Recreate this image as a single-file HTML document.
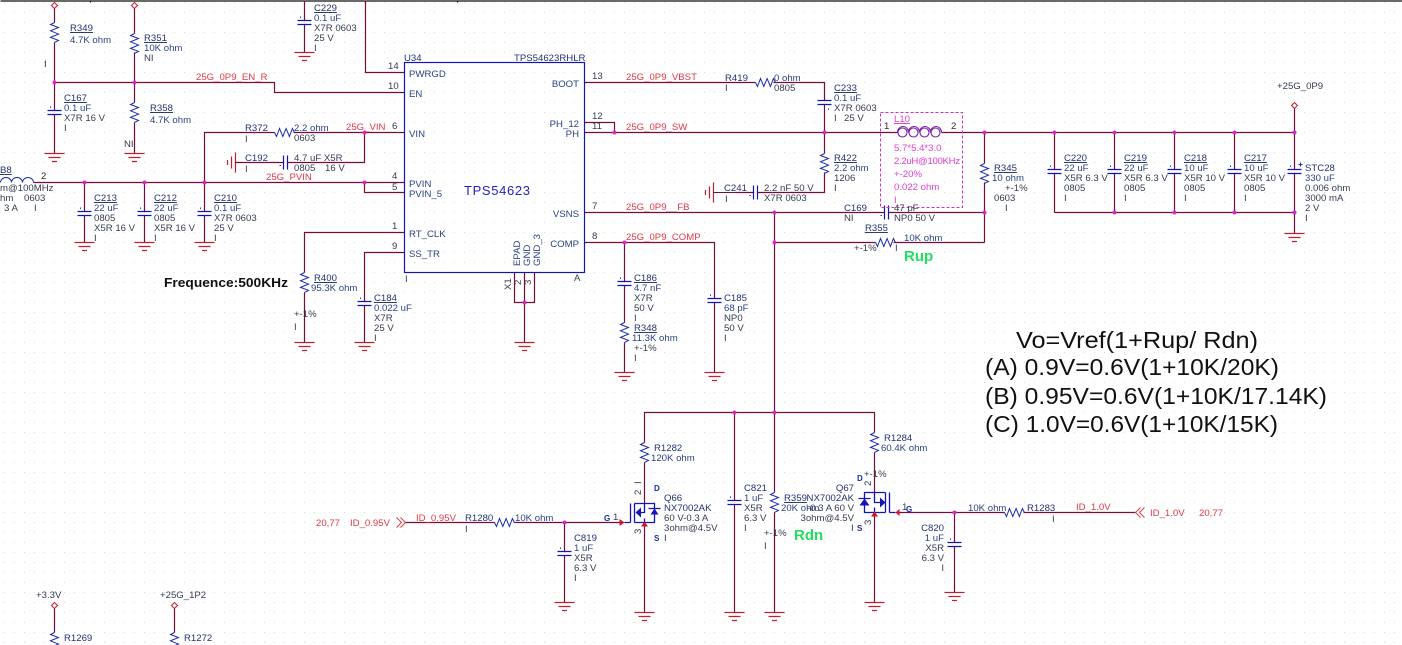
<!DOCTYPE html>
<html><head><meta charset="utf-8"><style>
html,body{margin:0;padding:0;background:#fff}
svg{display:block}
text{font-family:"Liberation Sans",sans-serif;font-size:9.6px;fill:#343c50}
.r{fill:#243270}.u{fill:#243270;text-decoration:underline}
.n{fill:#e03846}.p{fill:#2a4280}.k{fill:#2c2c2c}.m{fill:#e040d0}
.w{fill:none;stroke:#730e38;stroke-width:1.2}
.e{text-anchor:end}
.big{font-size:23px;fill:#111}
</style></head><body>
<svg width="1402" height="645" viewBox="0 0 1402 645" xmlns="http://www.w3.org/2000/svg">
<defs>
<pattern id="g" x="4" y="2" width="10" height="10" patternUnits="userSpaceOnUse"><rect width="1" height="1" fill="#d9d9d2"/></pattern>
<g id="rv"><path d="M0 0l-4 2 8 3-8 3.3 8 3.3-8 3.3 8 3-4 2" fill="none" stroke="#1c2cb0" stroke-width="1"/></g>
<g id="rh"><path d="M0 0l2 4 3-8 3.3 8 3.3-8 3.3 8 3-8 2 4" fill="none" stroke="#1c2cb0" stroke-width="1"/></g>
<g id="c"><path d="M-7 0h14M-7 4h14" stroke="#1414b0" stroke-width="1.200"/><path d="M-4-4v1.400" stroke="#1c2cb0"/></g>
<g id="ch"><path d="M0-7v14M4-7v14" stroke="#1414b0" stroke-width="1.200"/><path d="M-4 3h1.400" stroke="#1c2cb0"/></g>
<g id="gnd"><path d="M-10 0h20M-6 4h12M-2.500 8h5" stroke="#c02030" stroke-width="1.200"/></g>
<g id="gl"><path d="M0-10v20M-4-6v12M-8-2.500v5" stroke="#c02030" stroke-width="1.200"/></g>
<g id="d"><path d="M0-3l3 3-3 3-3-3z" fill="#fff" stroke="#c02030"/></g>
<circle id="j" r="2" fill="#d828c8"/>
</defs>
<rect width="1402" height="645" fill="#fff"/>
<rect width="1402" height="645" fill="url(#g)"/>
<g transform="translate(.5 .5)">
<path d="M0 .5H1402M90 0v2M457 0v2" stroke="#111" stroke-width="1.200" fill="none"/>

<!-- wires -->
<path class="w" d="M54 8V22M54 42V110M54 114V153M134 8V33M134 52V102M134 122V153
M54 82H274V92H404M365 0V72H404M304 0V20M304 24V52
M204 182V132H274M293 132H404M364 132V162H287M283 162H235
M33 182H404M364 182V192H404
M84 182V211M84 215V242M144 182V211M144 215V242M204 182V211M204 215V242
M404 232H304V272M304 292V342M404 252H364V301M364 305V342
M514 272V302H534V272M524 272V342
M584 82H755M773 82H824V100M824 104V153M824 172V192H757M753 192H735
M584 132H897M941 132H1294M584 122H614V132
M584 212H884M888 212H984M774 212V492M774 512V612
M584 242H714V298M714 302V372M624 242V281M624 285V322M624 342V372
M774 242H875M893 242H984M984 132V163M984 182V242
M1054 132V169M1054 173V212M1114 132V169M1114 173V212M1174 132V169M1174 173V212M1234 132V169M1234 173V212M1294 108V169M1294 173V233M1054 212H1294
M644 442V412H874V432M644 462V503M644 522V612M734 412V500M734 504V612
M874 452V492M874 512V602
M405 522H494M514 522H620M564 522V551M564 555V602
M899 512H1004M1023 512H1135M954 512V542M954 546V592
M54 608V632M174 608V632"/>

<!-- IC -->
<rect x="404" y="62" width="180" height="210" fill="none" stroke="#1414b8" stroke-width="1.200"/>

<!-- junctions -->
<use href="#j" x="54" y="82"/><use href="#j" x="134" y="82"/><use href="#j" x="364" y="132"/><use href="#j" x="84" y="182"/><use href="#j" x="144" y="182"/><use href="#j" x="204" y="182"/><use href="#j" x="364" y="182"/><use href="#j" x="524" y="302"/><use href="#j" x="614" y="132"/><use href="#j" x="624" y="242"/><use href="#j" x="774" y="212"/><use href="#j" x="774" y="242"/><use href="#j" x="824" y="132"/><use href="#j" x="984" y="132"/><use href="#j" x="984" y="212"/><use href="#j" x="1054" y="132"/><use href="#j" x="1114" y="132"/><use href="#j" x="1174" y="132"/><use href="#j" x="1234" y="132"/><use href="#j" x="1294" y="132"/><use href="#j" x="1114" y="212"/><use href="#j" x="1174" y="212"/><use href="#j" x="1234" y="212"/><use href="#j" x="1294" y="212"/><use href="#j" x="734" y="412"/><use href="#j" x="774" y="412"/><use href="#j" x="564" y="522"/><use href="#j" x="954" y="512"/>

<!-- resistors -->
<use href="#rv" x="54" y="22"/><use href="#rv" x="134" y="33"/><use href="#rv" x="134" y="102"/><use href="#rv" x="304" y="272"/><use href="#rv" x="624" y="322"/><use href="#rv" x="824" y="153"/><use href="#rv" x="984" y="163"/><use href="#rv" x="644" y="442"/><use href="#rv" x="774" y="492"/><use href="#rv" x="874" y="432"/><use href="#rv" x="54" y="632"/><use href="#rv" x="174" y="632"/>
<use href="#rh" x="274" y="132"/><use href="#rh" x="755" y="82"/><use href="#rh" x="875" y="242"/><use href="#rh" x="494" y="522"/><use href="#rh" x="1004" y="512"/>

<!-- caps -->
<use href="#c" x="54" y="110"/><use href="#c" x="304" y="20"/><use href="#c" x="84" y="211"/><use href="#c" x="144" y="211"/><use href="#c" x="204" y="211"/><use href="#c" x="364" y="301"/><use href="#c" x="624" y="281"/><use href="#c" x="714" y="298"/><use href="#c" x="1054" y="169"/><use href="#c" x="1114" y="169"/><use href="#c" x="1174" y="169"/><use href="#c" x="1234" y="169"/><use href="#c" x="1294" y="169"/><use href="#c" x="564" y="551"/><use href="#c" x="734" y="500"/><use href="#c" x="954" y="542"/>
<path d="M817 100h14M817 104h14" stroke="#1414b0" stroke-width="1.200"/><path d="M828 108v1.400" stroke="#1c2cb0"/>
<use href="#ch" x="283" y="162"/><use href="#ch" x="753" y="192"/><use href="#ch" x="884" y="212"/>
<path d="M1298 164h4M1300 162v4" stroke="#1c2cb0"/>

<!-- grounds -->
<use href="#gnd" x="54" y="153"/><use href="#gnd" x="134" y="153"/><use href="#gnd" x="304" y="52"/><use href="#gnd" x="84" y="242"/><use href="#gnd" x="144" y="242"/><use href="#gnd" x="204" y="242"/><use href="#gnd" x="304" y="342"/><use href="#gnd" x="364" y="342"/><use href="#gnd" x="524" y="342"/><use href="#gnd" x="624" y="372"/><use href="#gnd" x="714" y="372"/><use href="#gnd" x="1294" y="233"/><use href="#gnd" x="564" y="602"/><use href="#gnd" x="644" y="612"/><use href="#gnd" x="734" y="612"/><use href="#gnd" x="774" y="612"/><use href="#gnd" x="874" y="602"/><use href="#gnd" x="954" y="592"/>
<use href="#gl" x="235" y="162"/><use href="#gl" x="713" y="192"/>
<path d="M235 162h10M713 192h32" stroke="#730e38"/>

<!-- off-page -->
<use href="#d" x="54" y="5"/><use href="#d" x="134" y="5"/><use href="#d" x="1294" y="105"/><use href="#d" x="54" y="605"/><use href="#d" x="174" y="605"/>
<path d="M396 517l5 5-5 5M400 517l5 5-5 5M1140 507l-5 5 5 5M1144 507l-5 5 5 5" fill="none" stroke="#d84048"/>

<!-- inductors -->
<path d="M0 182a5.500 5 0 0 1 11 0a5.500 5 0 0 1 11 0a5.500 5 0 0 1 11 0" fill="none" stroke="#1c2cb0"/>
<g fill="none" stroke="#7a20a8" stroke-width="1.100"><ellipse cx="902" cy="132" rx="4.500" ry="4.500"/><ellipse cx="913" cy="132" rx="4.500" ry="4.500"/><ellipse cx="924" cy="132" rx="4.500" ry="4.500"/><ellipse cx="935" cy="132" rx="4.500" ry="4.500"/><path d="M897 132a5.500 6 0 0 1 11 0a5.500 6 0 0 1 11 0a5.500 6 0 0 1 11 0a5.500 6 0 0 1 11 0"/></g>
<rect x="880" y="112" width="82" height="95" fill="none" stroke="#d030c0" stroke-dasharray="3 2"/>

<!-- MOSFETs -->
<g fill="none" stroke="#1414b8" stroke-width="1.300">
<path d="M624 522H630M630 503V522M634 503V522M634 503H654V522H634M644 503V512H640M644 518V522M648 508H660"/>
<path d="M895 512H889M889 492V512M885 492V512M885 492H864V512H885M874 492V502H880M874 507V512M858 498H870"/>
</g>
<path d="M635 512l5.500-5v10zM654 508l-4 6h8zM885 502l-5.500-5v10zM864 498l-5 7h10z" fill="#1414b8"/>
<path d="M624 522l-5-3.500v7zM644 521l-3.500 5h7zM895 512l4-3.500v7zM874 511l-3.500 5h7z" fill="#d8102a"/>
</g>

<!-- left labels -->
<text class="u" x="70" y="31">R349</text><text x="70" y="43" class="p">4.7K ohm</text><text x="44" y="67" class="k">I</text>
<text class="u" x="144" y="41">R351</text><text class="p" x="144" y="51">10K ohm</text><text x="144" y="61">NI</text>
<text class="u" x="150" y="111">R358</text><text class="p" x="150" y="123">4.7K ohm</text><text x="124" y="147">NI</text>
<text class="u" x="64" y="101">C167</text><text class="p" x="64" y="111">0.1 uF</text><text x="64" y="121">X7R 16 V</text><text x="64" y="131">I</text>
<text class="u" x="314" y="11">C229</text><text class="p" x="314" y="21">0.1 uF</text><text x="314" y="31">X7R 0603</text><text x="314" y="41">25 V</text><text x="314" y="51">I</text>
<text class="n" x="196" y="80">25G_0P9_EN_R</text>
<text x="388" y="69">14</text><text x="388" y="89">10</text><text x="392" y="129">6</text><text x="392" y="179">4</text><text x="392" y="190">5</text><text x="392" y="229">1</text><text x="392" y="249">9</text>
<text class="r" x="245" y="131">R372</text><text x="245" y="142">I</text><text class="p" x="294" y="131">2.2 ohm</text><text x="294" y="141">0603</text>
<text class="n" x="346" y="130">25G_VIN</text>
<text class="r" x="245" y="161">C192</text><text x="245" y="172">I</text><text x="294" y="161">4.7 uF X5R</text><text x="294" y="171">0805</text><text x="325" y="171">16 V</text>
<text class="n" x="266" y="180">25G_PVIN</text>
<text class="u" x="0" y="173">B8</text><text x="0" y="191">m@100MHz</text><text x="0" y="201">hm</text><text x="24" y="201">0603</text><text x="4" y="211">3 A</text><text x="34" y="211">I</text><text class="k" x="41" y="179">2</text>
<text class="u" x="94" y="201">C213</text><text class="p" x="94" y="211">22 uF</text><text x="94" y="221">0805</text><text x="94" y="231">X5R 16 V</text><text x="94" y="241">I</text>
<text class="u" x="154" y="201">C212</text><text class="p" x="154" y="211">22 uF</text><text x="154" y="221">0805</text><text x="154" y="231">X5R 16 V</text><text x="154" y="241">I</text>
<text class="u" x="214" y="201">C210</text><text class="p" x="214" y="211">0.1 uF</text><text x="214" y="221">X7R 0603</text><text x="214" y="231">25 V</text><text x="214" y="241">I</text>
<text x="164" y="287" textLength="124" lengthAdjust="spacingAndGlyphs" style="font-size:13px;font-weight:bold;fill:#111">Frequence:500KHz</text>
<text class="u" x="314" y="281">R400</text><text class="p" x="311" y="291">95.3K ohm</text><text x="294" y="317">+-1%</text><text x="294" y="330">I</text>
<text class="u" x="374" y="301">C184</text><text class="p" x="374" y="311">0.022 uF</text><text x="374" y="321">X7R</text><text x="374" y="331">25 V</text><text x="374" y="341">I</text>

<!-- IC labels -->
<text class="r" x="404" y="61">U34</text><text class="r" x="514" y="61">TPS54623RHLR</text>
<text class="p" x="409" y="77">PWRGD</text><text class="p" x="409" y="97">EN</text><text class="p" x="409" y="137">VIN</text><text class="p" x="409" y="187">PVIN</text><text class="p" x="409" y="197">PVIN_5</text><text class="p" x="409" y="237">RT_CLK</text><text class="p" x="409" y="257">SS_TR</text>
<text class="p e" x="579" y="87">BOOT</text><text class="p e" x="579" y="127">PH_12</text><text class="p e" x="579" y="137">PH</text><text class="p e" x="579" y="217">VSNS</text><text class="p e" x="579" y="247">COMP</text>
<text x="464" y="195" textLength="66" style="font-size:13px;fill:#2222c4">TPS54623</text>
<text class="p" transform="translate(520 266) rotate(-90)">EPAD</text><text class="p" transform="translate(530 266) rotate(-90)">GND</text><text class="p" transform="translate(540 266) rotate(-90)">GND_3</text>
<text x="405" y="282">I</text><text x="574" y="281">A</text>
<text transform="translate(511 290) rotate(-90)">X1</text><text transform="translate(521 285) rotate(-90)">2</text><text transform="translate(531 285) rotate(-90)">3</text>
<text x="592" y="79">13</text><text x="592" y="119">12</text><text x="592" y="129">11</text><text x="592" y="209">7</text><text x="592" y="239">8</text>
<text class="n" x="626" y="80">25G_0P9_VBST</text><text class="n" x="626" y="130">25G_0P9_SW</text><text class="n" x="626" y="210">25G_0P9__FB</text><text class="n" x="626" y="240">25G_0P9_COMP</text>
<text class="r" x="725" y="81">R419</text><text x="725" y="91">I</text><text class="p" x="774" y="81">0 ohm</text><text x="774" y="91">0805</text>
<text class="r" x="724" y="191">C241</text><text x="725" y="202">I</text><text x="764" y="191">2.2 nF 50 V</text><text x="764" y="201">X7R 0603</text>
<text class="u" x="634" y="281">C186</text><text class="p" x="634" y="291">4.7 nF</text><text x="634" y="301">X7R</text><text x="634" y="311">50 V</text><text x="634" y="321">I</text>
<text class="u" x="634" y="331">R348</text><text class="p" x="632" y="341">11.3K ohm</text><text x="634" y="351">+-1%</text><text x="634" y="361">I</text>
<text class="r" x="724" y="301">C185</text><text class="p" x="724" y="311">68 pF</text><text x="724" y="321">NP0</text><text x="724" y="331">50 V</text><text x="724" y="341">I</text>

<!-- right labels -->
<text class="u" x="834" y="91">C233</text><text class="p" x="834" y="101">0.1 uF</text><text x="834" y="111">X7R 0603</text><text x="834" y="121">I</text><text x="844" y="121">25 V</text>
<text class="u" x="834" y="161">R422</text><text class="p" x="834" y="171">2.2 ohm</text><text x="834" y="181">1206</text><text x="834" y="191">I</text>
<text class="m" x="894" y="122" style="text-decoration:underline">L10</text><text class="k" x="884" y="129">1</text><text class="k" x="951" y="129">2</text>
<text class="m" x="894" y="151">5.7*5.4*3.0</text><text class="m" x="894" y="164" textLength="66">2.2uH@100KHz</text><text class="m" x="894" y="177">+-20%</text><text class="m" x="894" y="190">0.022 ohm</text><text class="m" x="894" y="203">I</text>
<text class="r" x="844" y="211">C169</text><text x="844" y="221">NI</text><text x="894" y="211">47 pF</text><text x="894" y="221">NP0 50 V</text>
<text class="u" x="865" y="231">R355</text><text x="854" y="251">+-1%</text><text x="895" y="251">I</text><text class="p" x="904" y="241">10K ohm</text>
<text x="904" y="261" style="font-size:15px;font-weight:bold;fill:#20e060">Rup</text>
<text class="u" x="994" y="171">R345</text><text class="p" x="992" y="181">10 ohm</text><text x="1005" y="191">+-1%</text><text x="994" y="201">0603</text><text x="1005" y="211">I</text>
<text class="u" x="1064" y="161">C220</text><text class="p" x="1064" y="171">22 uF</text><text x="1064" y="181">X5R 6.3 V</text><text x="1064" y="191">0805</text><text x="1064" y="201">I</text>
<text class="u" x="1124" y="161">C219</text><text class="p" x="1124" y="171">22 uF</text><text x="1124" y="181">X5R 6.3 V</text><text x="1124" y="191">0805</text><text x="1124" y="201">I</text>
<text class="u" x="1184" y="161">C218</text><text class="p" x="1184" y="171">10 uF</text><text x="1184" y="181">X5R 10 V</text><text x="1184" y="191">0805</text><text x="1184" y="201">I</text>
<text class="u" x="1244" y="161">C217</text><text class="p" x="1244" y="171">10 uF</text><text x="1244" y="181">X5R 10 V</text><text x="1244" y="191">0805</text><text x="1244" y="201">I</text>
<text class="r" x="1305" y="171">STC28</text><text class="p" x="1305" y="181">330 uF</text><text x="1305" y="191">0.006 ohm</text><text x="1305" y="201">3000 mA</text><text x="1305" y="211">2 V</text><text x="1305" y="221">I</text>
<text x="1277" y="89">+25G_0P9</text>

<!-- formula -->
<text class="big" x="1016" y="348" textLength="242" lengthAdjust="spacingAndGlyphs">Vo=Vref(1+Rup/ Rdn)</text>
<text class="big" x="985" y="375" textLength="294" lengthAdjust="spacingAndGlyphs">(A) 0.9V=0.6V(1+10K/20K)</text>
<text class="big" x="985" y="404" textLength="342" lengthAdjust="spacingAndGlyphs">(B) 0.95V=0.6V(1+10K/17.14K)</text>
<text class="big" x="985" y="432" textLength="293" lengthAdjust="spacingAndGlyphs">(C) 1.0V=0.6V(1+10K/15K)</text>

<!-- bottom labels -->
<text class="n" x="316" y="526">20,77</text><text class="n" x="350" y="526">ID_0.95V</text><text class="n" x="416" y="521">ID_0.95V</text>
<text class="r" x="465" y="521">R1280</text><text x="465" y="532">I</text><text class="p" x="515" y="521">10K ohm</text>
<text class="r" x="574" y="541">C819</text><text class="p" x="574" y="551">1 uF</text><text x="574" y="561">X5R</text><text x="574" y="571">6.3 V</text><text x="574" y="581">I</text>
<text x="604" y="521" style="font-size:8px;font-weight:bold;fill:#1a2aa8">G</text><text x="613" y="520">1</text>
<text x="654" y="491" style="font-size:8px;font-weight:bold;fill:#1a2aa8">D</text><text x="654" y="541" style="font-size:8px;font-weight:bold;fill:#1a2aa8">S</text>
<text transform="translate(641 495) rotate(-90)">2</text><text transform="translate(641 534) rotate(-90)">3</text><text transform="translate(641 484) rotate(-90)">I</text>
<text class="r" x="664" y="501">Q66</text><text class="r" x="664" y="511">NX7002AK</text><text x="664" y="521">60 V-0.3 A</text><text x="664" y="531">3ohm@4.5V</text><text x="664" y="541">I</text>
<text class="r" x="654" y="451">R1282</text><text class="p" x="651" y="461">120K ohm</text>
<text class="r" x="744" y="491">C821</text><text class="p" x="744" y="501">1 uF</text><text x="744" y="511">X5R</text><text x="744" y="521">6.3 V</text><text x="744" y="531">I</text>
<text class="u" x="784" y="501">R359</text><text class="p" x="781" y="511">20K ohm</text><text x="764" y="536">+-1%</text><text x="764" y="549">I</text>
<text x="794" y="540" style="font-size:15px;font-weight:bold;fill:#20e060">Rdn</text>
<text class="r e" x="854" y="491">Q67</text><text class="r e" x="854" y="501">NX7002AK</text><text class="e" x="854" y="511">-0.3 A 60 V</text><text class="e" x="854" y="521">3ohm@4.5V</text><text x="851" y="531">I</text>
<text x="857" y="481" style="font-size:8px;font-weight:bold;fill:#1a2aa8">D</text><text x="857" y="531" style="font-size:8px;font-weight:bold;fill:#1a2aa8">S</text>
<text x="864" y="477">+-1%</text><text transform="translate(871 486) rotate(-90)">2</text><text transform="translate(871 525) rotate(-90)">3</text>
<text class="r" x="884" y="441">R1284</text><text class="p" x="881" y="451">60.4K ohm</text>
<text x="902" y="510">1</text><text x="906" y="512" style="font-size:8px;font-weight:bold;fill:#1a2aa8">G</text>
<text class="p" x="968" y="511">10K ohm</text><text class="r" x="1027" y="511">R1283</text><text x="1052" y="522">I</text>
<text class="n" x="1076" y="510">ID_1.0V</text><text class="n" x="1150" y="516">ID_1.0V</text><text class="n" x="1199" y="516">20,77</text>
<text class="r e" x="944" y="531">C820</text><text class="p e" x="944" y="541">1 uF</text><text class="e" x="944" y="551">X5R</text><text class="e" x="944" y="561">6.3 V</text><text class="e" x="944" y="571">I</text>
<text x="36" y="598">+3.3V</text><text class="r" x="64" y="641">R1269</text><text x="160" y="598">+25G_1P2</text><text class="r" x="184" y="641">R1272</text>
</svg>
</body></html>
